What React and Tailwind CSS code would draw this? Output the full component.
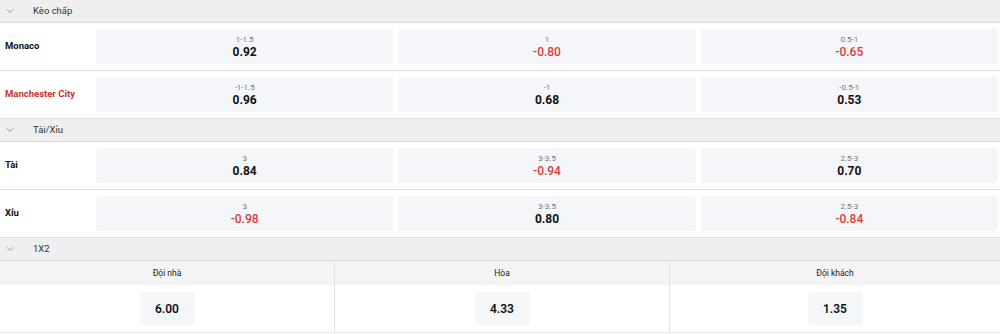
import { ChevronDown } from 'lucide-react';

const handicap = [
  {
    name: 'Monaco',
    red: false,
    odds: [
      { line: '1-1.5', value: '0.92' },
      { line: '1', value: '-0.80' },
      { line: '0.5-1', value: '-0.65' },
    ],
  },
  {
    name: 'Manchester City',
    red: true,
    odds: [
      { line: '-1-1.5', value: '0.96' },
      { line: '-1', value: '0.68' },
      { line: '-0.5-1', value: '0.53' },
    ],
  },
];

const overUnder = [
  {
    name: 'Tài',
    odds: [
      { line: '3', value: '0.84' },
      { line: '3-3.5', value: '-0.94' },
      { line: '2.5-3', value: '0.70' },
    ],
  },
  {
    name: 'Xỉu',
    odds: [
      { line: '3', value: '-0.98' },
      { line: '3-3.5', value: '0.80' },
      { line: '2.5-3', value: '-0.84' },
    ],
  },
];

const result = [
  { label: 'Đội nhà', value: '6.00' },
  { label: 'Hòa', value: '4.33' },
  { label: 'Đội khách', value: '1.35' },
];

function SectionHeader({ title }) {
  return (
    <div className="flex h-[23px] items-center border-b border-[#dadada] bg-[#efefef]">
      <ChevronDown className="ml-[4px] h-[12px] w-[12px] text-[#777]" strokeWidth={1.5} />
      <span className="ml-[17px] text-[9.5px] text-[#333]">{title}</span>
    </div>
  );
}

function OddsRow({ row }) {
  return (
    <div className="flex h-[48px] border-b border-[#e2e2e2] bg-white">
      <div className={`flex w-[96px] shrink-0 items-center pl-[5px] text-[9.5px] font-bold ${row.red ? 'text-[#c8322c]' : 'text-[#111]'}`}>
        {row.name}
      </div>
      <div className="grid flex-1 grid-cols-3 gap-[5px] py-[6px] pr-[2px]">
        {row.odds.map((o, i) => {
          const negative = o.value.startsWith('-');
          return (
            <div key={i} className="flex h-[35px] flex-col items-center justify-center rounded-[3px] bg-[#f5f6f9]">
              <span className="text-[8px] leading-[10px] text-[#777]">{o.line}</span>
              <span className={`text-[12px] leading-[14px] ${negative ? 'font-medium text-[#e03a3a]' : 'font-bold text-[#111]'}`}>
                {o.value}
              </span>
            </div>
          );
        })}
      </div>
    </div>
  );
}

export default function App() {
  return (
    <div className="w-[1000px] bg-white" style={{ fontFamily: 'Roboto, "Noto Sans", sans-serif' }}>
      <SectionHeader title="Kèo chấp" />
      {handicap.map((row) => (
        <OddsRow key={row.name} row={row} />
      ))}
      <SectionHeader title="Tài/Xỉu" />
      {overUnder.map((row) => (
        <OddsRow key={row.name} row={row} />
      ))}
      <SectionHeader title="1X2" />
      <div className="grid grid-cols-[335px_335px_1fr] border-b border-[#e2e2e2]">
        {result.map((r, i) => (
          <div key={r.label} className={i < 2 ? 'border-r border-[#e2e2e2]' : ''}>
            <div className="flex h-[24px] items-center justify-center bg-[#f4f4f4] text-[8.5px] text-[#222]">
              {r.label}
            </div>
            <div className="flex h-[47px] items-center justify-center">
              <div className="flex h-[33px] w-[55px] items-center justify-center rounded-[3px] bg-[#f5f6f9] text-[12px] font-semibold text-[#111]">
                {r.value}
              </div>
            </div>
          </div>
        ))}
      </div>
    </div>
  );
}
